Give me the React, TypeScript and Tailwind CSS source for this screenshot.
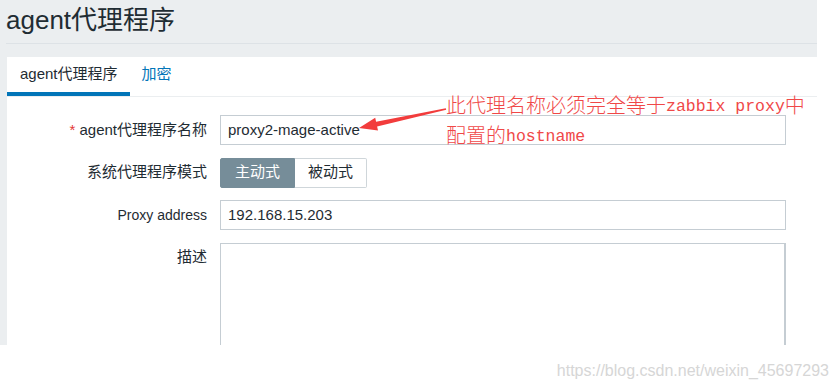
import React from 'react';

const FONT = "font-['Liberation_Sans','Noto_Sans_CJK_SC',sans-serif]";

function FormRow({ label, required, children, top }: { label: React.ReactNode; required?: boolean; children: React.ReactNode; top?: boolean }) {
  return (
    <div className={`flex gap-[13px] ${top ? 'items-start' : 'items-center'}`}>
      <div className="w-[200px] h-[30px] flex items-center justify-end text-[15px] text-[#1f2c33] whitespace-nowrap">
        {required && <span className="text-[#e33734] mr-[4px]">*</span>}
        {label}
      </div>
      {children}
    </div>
  );
}

function Annotation() {
  return (
    <>
      {/* red arrow pointing at the name field */}
      <svg className="absolute left-[350px] top-[100px]" width="100" height="35" viewBox="0 0 100 35">
        <polygon
          points="9,28 25.2,17.8 26.1,21.7 95.8,8.2 96.2,9.8 27.1,26.6 28,30.5"
          fill="#f23c3c"
        />
      </svg>
      <div className="absolute left-[446px] top-[92px] text-[20px] leading-[26px] text-[#f04848] whitespace-nowrap font-['Noto_Sans_CJK_SC',sans-serif] font-light">
        <div>
          此代理名称必须完全等于
          <span className="relative -top-[2px] font-['Liberation_Mono',monospace] text-[16.5px]">zabbix proxy</span>中
        </div>
        <div>
          配置的<span className="relative -top-[2px] font-['Liberation_Mono',monospace] text-[16.5px]">hostname</span>
        </div>
      </div>
    </>
  );
}

export default function App() {
  return (
    <div className={`relative w-[839px] h-[390px] bg-white overflow-hidden ${FONT}`}>
      <div className="w-[817px] h-[345px] bg-[#ebeef0] flex flex-col overflow-hidden">
        {/* Page header */}
        <div className="h-[44px] shrink-0 ml-[6px] pt-[7px] border-b border-[#dde2e6]">
          <h1 className="text-[26px] leading-[26px] text-[#1f2c33]">agent代理程序</h1>
        </div>

        {/* Card */}
        <div className="mt-[13px] ml-[7px] flex-1 bg-white">
          <div className="flex h-[40px] border-b border-[#ebeef0] text-[15px]">
            <div className="h-[39px] pl-[13px] pr-[12px] flex items-center border-b-4 border-[#0275b8] text-[#1f2c33]">
              agent代理程序
            </div>
            <div className="h-[39px] px-[12px] flex items-center border-b-4 border-transparent text-[#0275b8]">
              加密
            </div>
          </div>

          <div className="pt-[18px] flex flex-col gap-[12.5px]">
            <FormRow label="agent代理程序名称" required>
              <div className="w-[566px] h-[30px] border border-[#c5cdd3] pl-[7px] flex items-center text-[15px] text-[#1f2c33]">
                proxy2-mage-active
              </div>
            </FormRow>

            <FormRow label="系统代理程序模式">
              <div className="flex h-[30px] text-[15px]">
                <div className="w-[75px] flex items-center justify-center bg-[#768d99] border border-[#768d99] text-white rounded-l-[2px]">
                  主动式
                </div>
                <div className="w-[72px] flex items-center justify-center bg-white border border-l-0 border-[#cfd6da] text-[#1f2c33] rounded-r-[2px]">
                  被动式
                </div>
              </div>
            </FormRow>

            <FormRow label={<span className="text-[14px]">Proxy address</span>}>
              <div className="w-[566px] h-[30px] border border-[#c5cdd3] pl-[7px] flex items-center text-[15px] text-[#1f2c33]">
                192.168.15.203
              </div>
            </FormRow>

            <FormRow label="描述" top>
              <div className="w-[566px] h-[130px] border border-r-2 border-[#c5cdd3]" />
            </FormRow>
          </div>
        </div>
      </div>

      <Annotation />

      <div className="absolute right-[10px] top-[363px] text-[16px] leading-[16px] text-[#d6d6d6] font-['Liberation_Sans',sans-serif]">
        https://blog.csdn.net/weixin_45697293
      </div>
    </div>
  );
}
